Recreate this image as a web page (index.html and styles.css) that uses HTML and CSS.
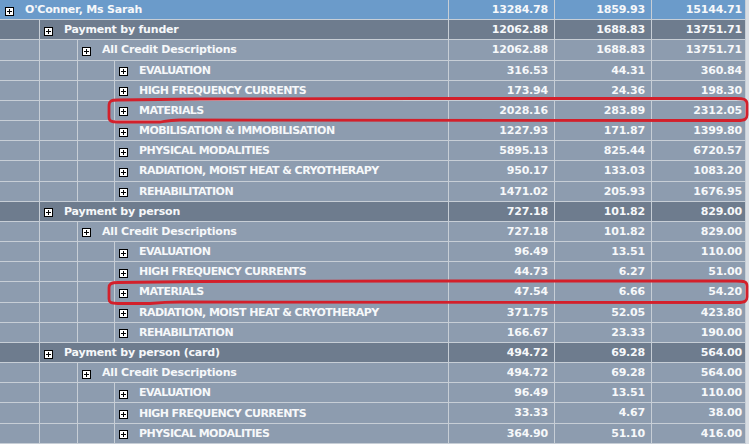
FILE: index.html
```html
<!DOCTYPE html>
<html>
<head>
<meta charset="utf-8">
<link rel="stylesheet" href="styles.css">
</head>
<body>
<div class="page">
  <div class="grid">
    <div class="row lvl0"><div class="label span4"><span class="pm"></span><span class="txt">O'Conner, Ms Sarah</span></div><div class="num">13284.78</div><div class="num">1859.93</div><div class="num last">15144.71</div></div>
    <div class="row lvl1"><div class="e"></div><div class="label span3"><span class="pm"></span><span class="txt">Payment by funder</span></div><div class="num">12062.88</div><div class="num">1688.83</div><div class="num last">13751.71</div></div>
    <div class="row lvl2"><div class="e"></div><div class="e"></div><div class="label span2"><span class="pm"></span><span class="txt">All Credit Descriptions</span></div><div class="num">12062.88</div><div class="num">1688.83</div><div class="num last">13751.71</div></div>
    <div class="row lvl3"><div class="e"></div><div class="e"></div><div class="e"></div><div class="label caps"><span class="pm"></span><span class="txt">EVALUATION</span></div><div class="num">316.53</div><div class="num">44.31</div><div class="num last">360.84</div></div>
    <div class="row lvl3"><div class="e"></div><div class="e"></div><div class="e"></div><div class="label caps"><span class="pm"></span><span class="txt">HIGH FREQUENCY CURRENTS</span></div><div class="num">173.94</div><div class="num">24.36</div><div class="num last">198.30</div></div>
    <div class="row lvl3"><div class="e"></div><div class="e"></div><div class="e"></div><div class="label caps"><span class="pm"></span><span class="txt">MATERIALS</span></div><div class="num">2028.16</div><div class="num">283.89</div><div class="num last">2312.05</div></div>
    <div class="row lvl3"><div class="e"></div><div class="e"></div><div class="e"></div><div class="label caps"><span class="pm"></span><span class="txt">MOBILISATION &amp; IMMOBILISATION</span></div><div class="num">1227.93</div><div class="num">171.87</div><div class="num last">1399.80</div></div>
    <div class="row lvl3"><div class="e"></div><div class="e"></div><div class="e"></div><div class="label caps"><span class="pm"></span><span class="txt">PHYSICAL MODALITIES</span></div><div class="num">5895.13</div><div class="num">825.44</div><div class="num last">6720.57</div></div>
    <div class="row lvl3"><div class="e"></div><div class="e"></div><div class="e"></div><div class="label caps"><span class="pm"></span><span class="txt">RADIATION, MOIST HEAT &amp; CRYOTHERAPY</span></div><div class="num">950.17</div><div class="num">133.03</div><div class="num last">1083.20</div></div>
    <div class="row lvl3"><div class="e"></div><div class="e"></div><div class="e"></div><div class="label caps"><span class="pm"></span><span class="txt">REHABILITATION</span></div><div class="num">1471.02</div><div class="num">205.93</div><div class="num last">1676.95</div></div>
    <div class="row lvl1"><div class="e"></div><div class="label span3"><span class="pm"></span><span class="txt">Payment by person</span></div><div class="num">727.18</div><div class="num">101.82</div><div class="num last">829.00</div></div>
    <div class="row lvl2"><div class="e"></div><div class="e"></div><div class="label span2"><span class="pm"></span><span class="txt">All Credit Descriptions</span></div><div class="num">727.18</div><div class="num">101.82</div><div class="num last">829.00</div></div>
    <div class="row lvl3"><div class="e"></div><div class="e"></div><div class="e"></div><div class="label caps"><span class="pm"></span><span class="txt">EVALUATION</span></div><div class="num">96.49</div><div class="num">13.51</div><div class="num last">110.00</div></div>
    <div class="row lvl3"><div class="e"></div><div class="e"></div><div class="e"></div><div class="label caps"><span class="pm"></span><span class="txt">HIGH FREQUENCY CURRENTS</span></div><div class="num">44.73</div><div class="num">6.27</div><div class="num last">51.00</div></div>
    <div class="row lvl3"><div class="e"></div><div class="e"></div><div class="e"></div><div class="label caps"><span class="pm"></span><span class="txt">MATERIALS</span></div><div class="num">47.54</div><div class="num">6.66</div><div class="num last">54.20</div></div>
    <div class="row lvl3"><div class="e"></div><div class="e"></div><div class="e"></div><div class="label caps"><span class="pm"></span><span class="txt">RADIATION, MOIST HEAT &amp; CRYOTHERAPY</span></div><div class="num">371.75</div><div class="num">52.05</div><div class="num last">423.80</div></div>
    <div class="row lvl3"><div class="e"></div><div class="e"></div><div class="e"></div><div class="label caps"><span class="pm"></span><span class="txt">REHABILITATION</span></div><div class="num">166.67</div><div class="num">23.33</div><div class="num last">190.00</div></div>
    <div class="row lvl1"><div class="e"></div><div class="label span3"><span class="pm"></span><span class="txt">Payment by person (card)</span></div><div class="num">494.72</div><div class="num">69.28</div><div class="num last">564.00</div></div>
    <div class="row lvl2"><div class="e"></div><div class="e"></div><div class="label span2"><span class="pm"></span><span class="txt">All Credit Descriptions</span></div><div class="num">494.72</div><div class="num">69.28</div><div class="num last">564.00</div></div>
    <div class="row lvl3"><div class="e"></div><div class="e"></div><div class="e"></div><div class="label caps"><span class="pm"></span><span class="txt">EVALUATION</span></div><div class="num">96.49</div><div class="num">13.51</div><div class="num last">110.00</div></div>
    <div class="row lvl3"><div class="e"></div><div class="e"></div><div class="e"></div><div class="label caps"><span class="pm"></span><span class="txt">HIGH FREQUENCY CURRENTS</span></div><div class="num">33.33</div><div class="num">4.67</div><div class="num last">38.00</div></div>
    <div class="row lvl3"><div class="e"></div><div class="e"></div><div class="e"></div><div class="label caps"><span class="pm"></span><span class="txt">PHYSICAL MODALITIES</span></div><div class="num">364.90</div><div class="num">51.10</div><div class="num last">416.00</div></div>
  </div>
  <svg class="marks" width="749" height="444" viewBox="0 0 749 444">
    <path d="M118 100 C111 100 109 101 109 106 L109 117 C109 121 111 122 118 122 L160 122 C166 121 170 120 180 120 L738 120.5 C745 120.5 747 119 747 115 L747 104 C747 99.5 744 98.5 736 98.5 L420 98.5 L200 99 C160 99.5 135 100 118 100 Z"/>
    <path d="M118 282.5 C111 282.5 109 284 109 288 L109 299 C109 302.5 111 303.5 118 303.5 L150 303.5 C160 302.5 168 302 180 302 L738 302.5 C745 302.5 747 301 747 297 L747 286 C747 281.5 744 281 736 281 L420 281 L200 281.5 C160 282 135 282.5 118 282.5 Z"/>
  </svg>
</div>
</body>
</html>
```
FILE: styles.css
```css
html, body {
  margin: 0;
  padding: 0;
  background: #d9dee4;
}
.page {
  position: relative;
  width: 749px;
  height: 444px;
  overflow: hidden;
}
.grid {
  display: flex;
  flex-direction: column;
  row-gap: 1px;
  width: 745px;
  background: #c7ced6;
  border-right: 1px solid #c7ced6;
  border-bottom: 1px solid #c7ced6;
  font-family: "DejaVu Sans", sans-serif;
  font-weight: bold;
  font-size: 11px;
  color: #f6f8fa;
}
.row {
  display: grid;
  grid-template-columns: 39px 37px 36px 333px 105px 96px 93px;
  column-gap: 1px;
  height: 19.18px;
  line-height: 19px;
}
.row > div {
  white-space: nowrap;
  overflow: hidden;
}
.lvl0 > div { background: #6b9bca; }
.lvl1 > div { background: #6e7c8e; }
.lvl2 > div, .lvl3 > div { background: #8d9caf; }
.span4 { grid-column: 1 / 5; }
.span3 { grid-column: 2 / 5; }
.span2 { grid-column: 3 / 5; }
.label {
  display: flex;
  align-items: center;
  padding-left: 4px;
}
.lvl0 .label { padding-left: 5px; }
.pm {
  flex: none;
  position: relative;
  width: 7px;
  height: 7px;
  border: 1px solid #000;
  background: #fff;
  margin-top: 3px;
  margin-right: 11px;
}
.pm::before, .pm::after {
  content: "";
  position: absolute;
  background: #000;
}
.pm::before { left: 1px; top: 3px; width: 5px; height: 1px; }
.pm::after { left: 3px; top: 1px; width: 1px; height: 5px; }
.txt { letter-spacing: -0.2px; }
.caps .txt { letter-spacing: -0.55px; }
.num {
  text-align: right;
  padding-right: 6px;
  letter-spacing: -0.2px;
}
.num.last { padding-right: 3px; }
.marks {
  position: absolute;
  left: 0;
  top: 0;
  pointer-events: none;
}
.marks path {
  fill: none;
  stroke: #d3202b;
  stroke-width: 2.8;
  stroke-linejoin: round;
}
```
